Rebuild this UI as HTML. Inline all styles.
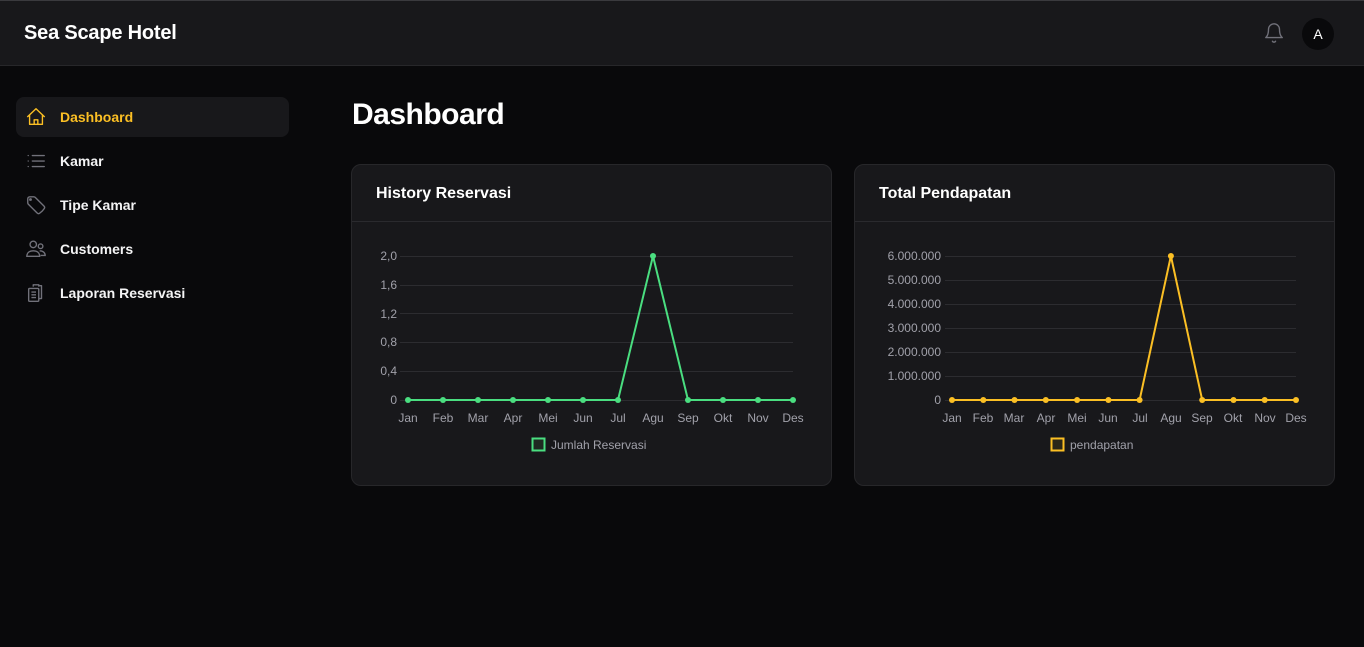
<!DOCTYPE html>
<html><head><meta charset="utf-8"><style>
*{margin:0;padding:0;box-sizing:border-box}
body{width:1364px;height:647px;background:#09090b;font-family:"Liberation Sans",sans-serif;color:#fff;position:relative;overflow:hidden}
.hdr{position:absolute;left:0;top:0;width:1364px;height:66px;background:#18181b;border-top:1px solid #3a3a3e;border-bottom:1px solid #27272a}
.logo{position:absolute;left:24px;top:21px;font-size:20px;font-weight:bold;letter-spacing:-0.2px}
.av{position:absolute;left:1302px;top:17px;width:32px;height:32px;border-radius:50%;background:#09090b;font-size:14px;text-align:center;line-height:32px}
.nav{position:absolute;left:16px;width:273px;height:40px;border-radius:8px;font-size:14px;font-weight:bold;color:#f4f4f5}
.nav span{position:absolute;left:44px;top:12px}
.nav svg{position:absolute;left:9px;top:9px}
.act{background:#18181b;color:#fbbf24}
h1{position:absolute;left:352px;top:98px;font-size:30px;font-weight:bold;letter-spacing:-0.5px}
.card{position:absolute;top:164px;width:481px;height:322px;background:#18181b;border:1px solid #27272a;border-radius:10px}
.card .t{position:absolute;left:24px;top:20px;font-size:16px;font-weight:bold}
.card .d{position:absolute;left:0;top:56px;width:100%;border-top:1px solid #2a2a2e}
svg.ch{position:absolute;left:0;top:0}
</style></head><body>
<div class="hdr"><div class="logo">Sea Scape Hotel</div>
<svg style="position:absolute;left:1263px;top:21px" width="22" height="22" viewBox="0 0 24 24" fill="none" stroke="#71717a" stroke-width="1.5" stroke-linecap="round" stroke-linejoin="round"><path d="M6 8a6 6 0 0 1 12 0c0 7 3 9 3 9H3s3-2 3-9"/><path d="M10.3 21a1.94 1.94 0 0 0 3.4 0"/></svg>
<div class="av">A</div></div>

<div class="nav act" style="top:97px"><svg width="22" height="22" viewBox="0 0 24 24" fill="none" stroke="#fbbf24" stroke-width="1.5" stroke-linejoin="round"><path d="M2.5 12 12 3l9.5 9M5 10v10h14V10"/><path d="M10 20v-5h4v5"/></svg><span>Dashboard</span></div>
<div class="nav" style="top:141px"><svg width="22" height="22" viewBox="0 0 24 24" fill="none" stroke="#71717a" stroke-width="1.5" stroke-linecap="round"><path d="M8 6h13M8 12h13M8 18h13M3.5 6h.01M3.5 12h.01M3.5 18h.01"/></svg><span>Kamar</span></div>
<div class="nav" style="top:185px"><svg width="22" height="22" viewBox="0 0 24 24" fill="none" stroke="#71717a" stroke-width="1.5" stroke-linejoin="round"><path d="M9.568 3H5.25A2.25 2.25 0 0 0 3 5.25v4.318c0 .597.237 1.17.659 1.591l9.581 9.581c.699.699 1.78.872 2.607.33a18.1 18.1 0 0 0 5.223-5.223c.542-.827.369-1.908-.33-2.607L11.16 3.66A2.25 2.25 0 0 0 9.568 3z"/><circle cx="6" cy="6" r=".8"/></svg><span>Tipe Kamar</span></div>
<div class="nav" style="top:229px"><svg width="22" height="22" viewBox="0 0 24 24" fill="none" stroke="#71717a" stroke-width="1.5"><circle cx="9" cy="7" r="3.5"/><circle cx="17" cy="9" r="2.5"/><path d="M2 20c0-4 3-6 7-6s7 2 7 6zM16 14c3 0 6 1.5 6 5h-5"/></svg><span>Customers</span></div>
<div class="nav" style="top:273px"><svg width="22" height="22" viewBox="0 0 24 24" fill="none" stroke="#71717a" stroke-width="1.5" stroke-linejoin="round"><path d="M9 5V3h6v2M15 4h3v14h-3"/><rect x="4" y="7" width="11" height="14" rx="1"/><path d="M7 11h5M7 14h5M7 17h5"/></svg><span>Laporan Reservasi</span></div>

<h1>Dashboard</h1>
<div class="card" style="left:351px"><div class="t">History Reservasi</div><div class="d"></div></div>
<div class="card" style="left:854px"><div class="t">Total Pendapatan</div><div class="d"></div></div>

<svg class="ch" width="1364" height="647" font-family="Liberation Sans, sans-serif" font-size="12" fill="#a1a1aa">
<g stroke="#2c2c30" stroke-width="1">
<path d="M400 256.5H793M400 285.5H793M400 313.5H793M400 342.5H793M400 371.5H793M400 400.5H793"/>
<path d="M945 256.5H1296M945 280.5H1296M945 304.5H1296M945 328.5H1296M945 352.5H1296M945 376.5H1296M945 400.5H1296"/>
</g>
<g text-anchor="end">
<text x="397" y="260">2,0</text><text x="397" y="289">1,6</text><text x="397" y="318">1,2</text><text x="397" y="346">0,8</text><text x="397" y="375">0,4</text><text x="397" y="404">0</text>
<text x="941" y="260">6.000.000</text><text x="941" y="284">5.000.000</text><text x="941" y="308">4.000.000</text><text x="941" y="332">3.000.000</text><text x="941" y="356">2.000.000</text><text x="941" y="380">1.000.000</text><text x="941" y="404">0</text>
</g>
<g text-anchor="middle">
<text x="408" y="422">Jan</text><text x="443" y="422">Feb</text><text x="478" y="422">Mar</text><text x="513" y="422">Apr</text><text x="548" y="422">Mei</text><text x="583" y="422">Jun</text><text x="618" y="422">Jul</text><text x="653" y="422">Agu</text><text x="688" y="422">Sep</text><text x="723" y="422">Okt</text><text x="758" y="422">Nov</text><text x="793" y="422">Des</text>
<text x="952" y="422">Jan</text><text x="983" y="422">Feb</text><text x="1014" y="422">Mar</text><text x="1046" y="422">Apr</text><text x="1077" y="422">Mei</text><text x="1108" y="422">Jun</text><text x="1140" y="422">Jul</text><text x="1171" y="422">Agu</text><text x="1202" y="422">Sep</text><text x="1233" y="422">Okt</text><text x="1265" y="422">Nov</text><text x="1296" y="422">Des</text>
</g>
<polyline fill="none" stroke="#4ade80" stroke-width="2" points="408,400 618,400 653,256 688,400 793,400"/>
<g fill="#4ade80"><circle cx="408" cy="400" r="3"/><circle cx="443" cy="400" r="3"/><circle cx="478" cy="400" r="3"/><circle cx="513" cy="400" r="3"/><circle cx="548" cy="400" r="3"/><circle cx="583" cy="400" r="3"/><circle cx="618" cy="400" r="3"/><circle cx="653" cy="256" r="3"/><circle cx="688" cy="400" r="3"/><circle cx="723" cy="400" r="3"/><circle cx="758" cy="400" r="3"/><circle cx="793" cy="400" r="3"/></g>
<polyline fill="none" stroke="#fbbf24" stroke-width="2" points="952,400 1139.6,400 1170.9,256 1202.2,400 1296,400"/>
<g fill="#fbbf24"><circle cx="952" cy="400" r="3"/><circle cx="983.3" cy="400" r="3"/><circle cx="1014.5" cy="400" r="3"/><circle cx="1045.8" cy="400" r="3"/><circle cx="1077.1" cy="400" r="3"/><circle cx="1108.4" cy="400" r="3"/><circle cx="1139.6" cy="400" r="3"/><circle cx="1170.9" cy="256" r="3"/><circle cx="1202.2" cy="400" r="3"/><circle cx="1233.5" cy="400" r="3"/><circle cx="1264.7" cy="400" r="3"/><circle cx="1296" cy="400" r="3"/></g>
<rect x="532.5" y="438.5" width="12" height="12" fill="#1f2a22" stroke="#4ade80" stroke-width="2"/>
<text x="551" y="449">Jumlah Reservasi</text>
<rect x="1051.5" y="438.5" width="12" height="12" fill="#2a2618" stroke="#fbbf24" stroke-width="2"/>
<text x="1070" y="449">pendapatan</text>
</svg>
</body></html>
